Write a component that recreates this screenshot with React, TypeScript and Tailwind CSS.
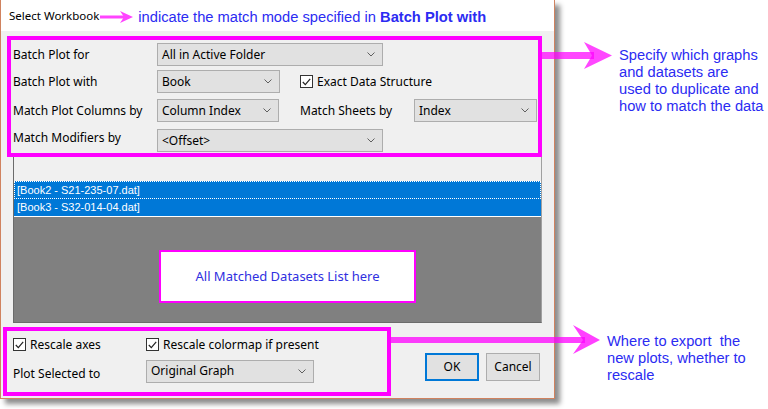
import React from 'react'

const ui = "font-['Noto_Sans',sans-serif] text-[12px] text-black"
const note = "font-['Liberation_Sans',Arial,sans-serif] text-[14.7px] leading-[17px] text-[#2b2bf2]"

function Chevron() {
  return (
    <svg width="8" height="5" viewBox="0 0 8 5" className="shrink-0">
      <path d="M0.5 0.5 L4 4 L7.5 0.5" fill="none" stroke="#5f5f5f" strokeWidth="1" />
    </svg>
  )
}

function Combo({ text, className }: { text: string; className: string }) {
  return (
    <div
      className={`flex h-[23px] items-center justify-between border border-[#adadad] bg-[#e1e1e1] pr-[7px] pl-[4px] ${className}`}
    >
      <span className="leading-none">{text}</span>
      <Chevron />
    </div>
  )
}

function Check({ label }: { label: string }) {
  return (
    <div className="flex items-center gap-[4px]">
      <div className="flex h-[13px] w-[13px] items-center justify-center border border-[#333] bg-white">
        <svg width="9" height="8" viewBox="0 0 9 8">
          <path d="M0.8 4 L3.3 6.6 L8.2 0.8" fill="none" stroke="#222" strokeWidth="1.2" />
        </svg>
      </div>
      <span className="leading-none">{label}</span>
    </div>
  )
}

export default function App() {
  return (
    <div className="relative h-[409px] w-[768px] overflow-hidden bg-white">
      {/* dialog */}
      <div
        className={`flex h-[399px] w-[555px] flex-col border-x border-b border-[#d0825f] bg-[#f0f0f0] shadow-[5px_5px_5px_rgba(0,0,0,0.45)] ${ui}`}
      >
        {/* title */}
        <div className="flex h-[31px] shrink-0 items-center bg-white pl-[8px]">
          <span className="text-[11.5px]">Select Workbook</span>
          <svg width="34" height="12" viewBox="0 0 34 12" className="mt-[2px] ml-[1px]">
            <rect x="0" y="4.5" width="24" height="3" fill="#ff44ff" />
            <polygon points="20,0 33,6 20,12 24,6" fill="#ff44ff" />
          </svg>
          <span className={`mt-[3px] ml-[4px] ${note}`}>
            indicate the match mode specified in <b>Batch Plot with</b>
          </span>
        </div>

        {/* options box */}
        <div className="mt-[5px] ml-[6px] h-[121px] w-[535px] shrink-0 border-4 border-[#ff00ff] pt-[3px] pl-[2px]">
          <div className="flex items-center">
            <span className="w-[144px]">Batch Plot for</span>
            <Combo text="All in Active Folder" className="w-[226px]" />
          </div>
          <div className="mt-[4px] flex items-center">
            <span className="w-[144px]">Batch Plot with</span>
            <Combo text="Book" className="h-[22px] w-[123px]" />
            <div className="ml-[20px]">
              <Check label="Exact Data Structure" />
            </div>
          </div>
          <div className="mt-[6px] flex items-center">
            <span className="w-[144px]">Match Plot Columns by</span>
            <Combo text="Column Index" className="w-[122px]" />
            <span className="ml-[21px] w-[114px]">Match Sheets by</span>
            <Combo text="Index" className="w-[123px]" />
          </div>
          <div className="mt-[7px] flex items-start">
            <span className="w-[144px] leading-[17px]">Match Modifiers by</span>
            <Combo text="<Offset>" className="w-[226px]" />
          </div>
        </div>

        {/* dataset list */}
        <div className="ml-[12px] flex h-[166px] w-[529px] shrink-0 flex-col border-x border-b border-l-[#6b6b6b] border-r-[#a0a0a0] border-b-[#6b6b6b] font-['Liberation_Sans',Arial,sans-serif] text-[11px] text-white">
          <div className="h-[24px] shrink-0 bg-[#f0f0f0]" />
          <div className="flex h-[18px] shrink-0 items-center border border-dotted border-white bg-[#0078d7] pl-[2px]">
            [Book2 - S21-235-07.dat]
          </div>
          <div className="flex h-[18px] shrink-0 items-center border-b border-white bg-[#0078d7] pl-[3px]">
            [Book3 - S32-014-04.dat]
          </div>
          <div className="flex-1 bg-[#808080] pt-[33px] pl-[145px]">
            <div className="flex h-[53px] w-[257px] items-center justify-center border-2 border-[#ff00ff] bg-white font-['Noto_Sans',sans-serif] text-[13px] text-[#3030e0]">
              All Matched Datasets List here
            </div>
          </div>
        </div>

        {/* bottom */}
        <div className="mt-[4px] flex items-start">
          <div className="ml-[2px] h-[69px] w-[388px] border-4 border-[#ff00ff] pt-[7px] pl-[6px]">
            <div className="flex">
              <div className="w-[133px]">
                <Check label="Rescale axes" />
              </div>
              <Check label="Rescale colormap if present" />
            </div>
            <div className="mt-[8px] flex items-center">
              <span className="mt-[6px] w-[133px]">Plot Selected to</span>
              <Combo text="Original Graph" className="w-[168px]" />
            </div>
          </div>
          <div className="mt-[26px] ml-[34px] flex gap-[7px]">
            <button className="h-[28px] w-[54px] border-2 border-[#0078d7] bg-[#e1e1e1]">OK</button>
            <button className="h-[28px] w-[54px] border border-[#adadad] bg-[#e1e1e1]">Cancel</button>
          </div>
        </div>
      </div>

      {/* callout arrows */}
      <svg className="absolute top-[40px] left-[542px]" width="72" height="32" viewBox="0 0 72 32">
        <rect x="0" y="12" width="52" height="7" fill="rgba(255,0,255,0.72)" />
        <polygon points="42,2 70,15.5 42,29 50,15.5" fill="rgba(255,0,255,0.72)" />
      </svg>
      <svg className="absolute top-[324px] left-[391px]" width="212" height="32" viewBox="0 0 212 32">
        <rect x="0" y="13" width="194" height="6" fill="rgba(255,0,255,0.75)" />
        <polygon points="182,1 209,16 182,30 192,16" fill="rgba(255,0,255,0.75)" />
      </svg>

      <div className={`absolute top-[47px] left-[619px] ${note}`}>
        Specify which graphs
        <br />
        and datasets are
        <br />
        used to duplicate and
        <br />
        how to match the data
      </div>
      <div className={`absolute top-[333px] left-[607px] whitespace-pre ${note}`}>
        {'Where to export  the\nnew plots, whether to\nrescale'}
      </div>
    </div>
  )
}
